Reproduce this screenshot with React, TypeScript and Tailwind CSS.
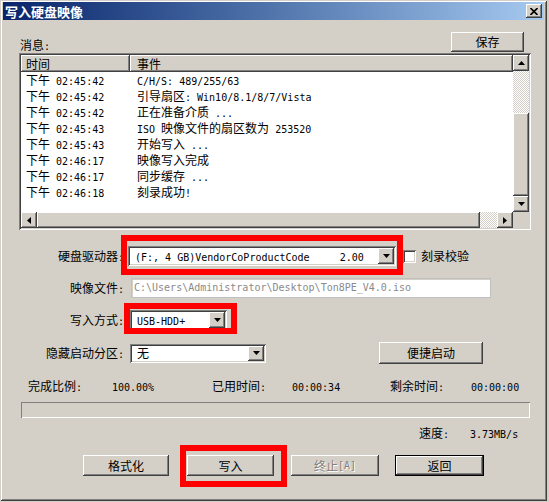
import React from 'react';

const raised =
  'bg-[#d4d0c8] shadow-[inset_-1px_-1px_#404040,inset_1px_1px_#ffffff,inset_-2px_-2px_#808080,inset_2px_2px_#d4d0c8]';
const sunken =
  'shadow-[inset_1px_1px_#808080,inset_-1px_-1px_#ffffff,inset_2px_2px_#404040,inset_-2px_-2px_#d4d0c8]';

// half-width runs get a 6px-wide mono face, like the SimSun bitmap
function T({ s }: { s: string }) {
  const parts = s.match(/[\u0000-\u00ff]+|[^\u0000-\u00ff]+/g) ?? [];
  return (
    <>
      {parts.map((p, i) =>
        p.charCodeAt(0) <= 0xff ? (
          <span key={i} className="font-['DejaVu_Sans_Mono',monospace] text-[10px]">
            {p}
          </span>
        ) : (
          <span key={i}>{p}</span>
        )
      )}
    </>
  );
}

function Arrow({ dir }: { dir: 'up' | 'down' | 'left' | 'right' }) {
  const pts = {
    up: '0,4 7,4 3.5,0',
    down: '0,0 7,0 3.5,4',
    left: '4,0 4,7 0,3.5',
    right: '0,0 0,7 4,3.5',
  }[dir];
  const v = dir === 'up' || dir === 'down';
  return (
    <svg width={v ? 7 : 4} height={v ? 4 : 7} viewBox={v ? '0 0 7 4' : '0 0 4 7'}>
      <polygon points={pts} fill="#000" />
    </svg>
  );
}

function Btn({ label, className, disabled, def }: { label: string; className: string; disabled?: boolean; def?: boolean }) {
  return (
    <div className={`${className} ${def ? 'border border-black' : ''}`}>
      <div
        className={`${raised} w-full h-full flex items-center justify-center leading-none ${
          disabled ? 'text-[#808080] [text-shadow:1px_1px_0_#ffffff]' : ''
        }`}
      >
        <T s={label} />
      </div>
    </div>
  );
}

function Combo({ text, className }: { text: string; className: string }) {
  return (
    <div className={`${sunken} ${className} bg-white flex items-center p-[2px] whitespace-pre`}>
      <div className="flex-1 pl-[5px] leading-none">
        <T s={text} />
      </div>
      <div className={`${raised} w-[16px] h-full flex items-center justify-center`}>
        <Arrow dir="down" />
      </div>
    </div>
  );
}

const log = [
  ['下午 02:45:42', 'C/H/S: 489/255/63'],
  ['下午 02:45:42', '引导扇区: Win10/8.1/8/7/Vista'],
  ['下午 02:45:42', '正在准备介质 ...'],
  ['下午 02:45:43', 'ISO 映像文件的扇区数为 253520'],
  ['下午 02:45:43', '开始写入 ...'],
  ['下午 02:46:17', '映像写入完成'],
  ['下午 02:46:17', '同步缓存 ...'],
  ['下午 02:46:18', '刻录成功!'],
];

export default function App() {
  return (
    <div className="relative w-[549px] h-[502px] bg-[#d4d0c8] font-['Noto_Sans_CJK_SC',sans-serif] text-[12px] text-black overflow-hidden">
      <div className="flex flex-col w-[547px] h-[501px] pt-[2px] px-[3px] shadow-[inset_1px_1px_#d4d0c8,inset_-1px_-1px_#404040,inset_2px_2px_#ffffff,inset_-2px_-2px_#808080]">
        {/* title bar */}
        <div className="flex items-center h-[18px] bg-linear-to-r from-[#0a246a] to-[#a6caf0]">
          <span className="pl-[2px] text-white font-bold text-[13px] leading-none">写入硬盘映像</span>
          <div className={`${raised} ml-auto mr-[2px] w-[16px] h-[14px] flex items-center justify-center`}>
            <svg width="8" height="7" viewBox="0 0 8 7">
              <path d="M0.5 0L7.5 7M7.5 0L0.5 7" stroke="#000" strokeWidth="1.6" />
            </svg>
          </div>
        </div>

        {/* message header */}
        <div className="mt-[12px] flex h-[20px]">
          <div className="ml-[17px] mt-[5px] leading-[16px]">
            <T s="消息:" />
          </div>
          <Btn label="保存" className="ml-auto mr-[20px] w-[73px] h-[20px]" />
        </div>

        {/* log list */}
        <div className={`${sunken} mt-[1px] ml-[16px] w-[512px] h-[177px] p-[2px] bg-white flex flex-col`}>
          <div className="flex h-[157px]">
            <div className="w-[492px] flex flex-col">
              <div className="flex h-[17px] leading-[17px] bg-[#d4d0c8]">
                <div className="w-[109px] pl-[5px] shadow-[inset_-1px_-1px_#404040,inset_1px_1px_#ffffff,inset_-2px_-2px_#808080]">
                  时间
                </div>
                <div className="flex-1 pl-[7px] shadow-[inset_-1px_-1px_#404040,inset_1px_1px_#ffffff,inset_-2px_-2px_#808080]">
                  事件
                </div>
              </div>
              {log.map(([t, e], i) => (
                <div key={i} className="flex h-[16px] leading-[16px] whitespace-pre">
                  <div className="w-[109px] pl-[5px]">
                    <T s={t} />
                  </div>
                  <div className="pl-[7px]">
                    <T s={e} />
                  </div>
                </div>
              ))}
            </div>
            <div className="w-[16px] flex flex-col">
              <div className={`${raised} h-[16px] flex items-center justify-center`}>
                <Arrow dir="up" />
              </div>
              <div className="h-[42px] bg-[repeating-conic-gradient(#ffffff_0_25%,#d4d0c8_0_50%)] bg-size-[2px_2px]" />
              <div className={`${raised} h-[83px]`} />
              <div className={`${raised} h-[16px] flex items-center justify-center`}>
                <Arrow dir="down" />
              </div>
            </div>
          </div>
          <div className="flex h-[16px]">
            <div className={`${raised} w-[16px] flex items-center justify-center`}>
              <Arrow dir="left" />
            </div>
            <div className={`${raised} w-[443px]`} />
            <div className="w-[17px] bg-[repeating-conic-gradient(#ffffff_0_25%,#d4d0c8_0_50%)] bg-size-[2px_2px]" />
            <div className={`${raised} w-[16px] flex items-center justify-center`}>
              <Arrow dir="right" />
            </div>
            <div className="w-[16px] bg-[#d4d0c8]" />
          </div>
        </div>

        {/* drive */}
        <div className="mt-[16px] flex items-center h-[20px]">
          <div className="w-[121px] text-right leading-none">
            <T s="硬盘驱动器:" />
          </div>
          <Combo text="(F:, 4 GB)VendorCoProductCode     2.00" className="ml-[4px] w-[268px] h-[20px]" />
          <div className={`${sunken} ml-[7px] w-[13px] h-[13px] bg-white`} />
          <span className="ml-[5px] leading-none">刻录校验</span>
        </div>

        {/* image file */}
        <div className="mt-[12px] flex items-center h-[20px]">
          <div className="w-[121px] text-right leading-none">
            <T s="映像文件:" />
          </div>
          <div className="ml-[7px] w-[360px] h-[20px] bg-white border border-[#c0c0c0] shadow-[inset_1px_1px_#d4d0c8] flex items-center pl-[2px] text-[#8a8a8a] whitespace-pre leading-none">
            <T s="C:\Users\Administrator\Desktop\Ton8PE_V4.0.iso" />
          </div>
        </div>

        {/* write mode */}
        <div className="mt-[12px] flex items-center h-[20px]">
          <div className="w-[121px] text-right leading-none">
            <T s="写入方式:" />
          </div>
          <Combo text="USB-HDD+" className="ml-[6px] w-[97px] h-[20px]" />
        </div>

        {/* hidden partition */}
        <div className="mt-[12px] flex items-center h-[22px]">
          <div className="w-[121px] text-right leading-none">
            <T s="隐藏启动分区:" />
          </div>
          <Combo text="无" className="ml-[6px] w-[136px] h-[19px]" />
          <Btn label="便捷启动" className="ml-[113px] w-[104px] h-[22px]" />
        </div>

        {/* stats */}
        <div className="mt-[14px] flex h-[16px] leading-[16px] pl-[25px] whitespace-pre">
          <span className="w-[84px]"><T s="完成比例:" /></span>
          <span className="w-[100px]"><T s="100.00%" /></span>
          <span className="w-[80px]"><T s="已用时间:" /></span>
          <span className="w-[98px]"><T s="00:00:34" /></span>
          <span className="w-[81px]"><T s="剩余时间:" /></span>
          <span><T s="00:00:00" /></span>
        </div>

        <div className="mt-[8px] ml-[18px] w-[509px] h-[16px] shadow-[inset_1px_1px_#808080,inset_-1px_-1px_#ffffff]" />

        <div className="mt-[7px] flex h-[16px] leading-[16px] pl-[416px] whitespace-pre">
          <span className="w-[51px]"><T s="速度:" /></span>
          <span><T s="3.73MB/s" /></span>
        </div>

        {/* buttons */}
        <div className="mt-[14px] flex h-[21px]">
          <Btn label="格式化" className="ml-[80px] w-[86px] h-[21px]" />
          <Btn label="写入" className="ml-[18px] w-[87px] h-[21px]" />
          <Btn label="终止[A]" className="ml-[17px] w-[88px] h-[21px]" disabled />
          <Btn label="返回" className="ml-[16px] w-[89px] h-[21px]" def />
        </div>
      </div>

      {/* red annotation boxes */}
      <div className="absolute left-[121px] top-[235px] w-[282px] h-[40px] border-[6px] border-[#ff0000] pointer-events-none" />
      <div className="absolute left-[124px] top-[303px] w-[113px] h-[31px] border-[6px] border-[#ff0000] pointer-events-none" />
      <div className="absolute left-[180px] top-[445px] w-[107px] h-[42px] border-[6px] border-[#ff0000] pointer-events-none" />
    </div>
  );
}
